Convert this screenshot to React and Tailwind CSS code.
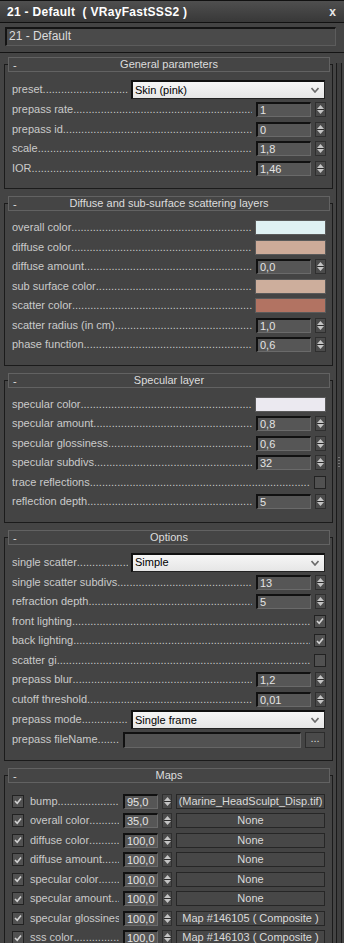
import React from 'react';

const FONT = { fontFamily: '"Liberation Sans", Arial, sans-serif' };

// leader dots, count roughly fits the room left of the control
const Dots = ({ n }) => (
  <span className="flex-1 min-w-0 overflow-hidden whitespace-nowrap">{'.'.repeat(n)}</span>
);

const Label = ({ text, n, className = 'flex-1' }) => (
  <div className={`flex min-w-0 items-center overflow-hidden text-[#cacaca] text-[11px] leading-[13px] ${className}`}>
    <span className="whitespace-nowrap">{text}</span>
    <Dots n={n} />
  </div>
);

const Spinner = ({ w = 'w-[11px]' }) => (
  <div className={`${w} h-[15px] shrink-0 bg-[#4b4b4b] border border-[#2f2f2f] flex flex-col items-center justify-between py-[2px]`}>
    <svg width="7" height="4" viewBox="0 0 7 4"><path d="M0 4 L3.5 0 L7 4 Z" fill="#c4c4c4" /></svg>
    <div className="w-[7px] h-px bg-[#2c2c2c]" />
    <svg width="7" height="4" viewBox="0 0 7 4"><path d="M0 0 L3.5 4 L7 0 Z" fill="#c4c4c4" /></svg>
  </div>
);

const NumBox = ({ value, w = 'w-[55px]' }) => (
  <div className={`${w} h-[15px] shrink-0 bg-[#565656] border-t-2 border-l-2 border-[#111] border-r border-b border-r-[#6a6a6a] border-b-[#6a6a6a] text-[#e4e4e4] text-[11px] leading-[12px] pl-[2px] whitespace-nowrap`}>
    {value}
  </div>
);

const Check = ({ checked }) => (
  <div className="w-[12px] h-[13px] shrink-0 bg-[#515151] border border-[#222] flex items-center justify-center">
    {checked && (
      <svg width="8" height="8" viewBox="0 0 8 8">
        <path d="M1 4 L3.2 6.3 L7 1.5" stroke="#d2d2d2" strokeWidth="1.6" fill="none" />
      </svg>
    )}
  </div>
);

const Dropdown = ({ value }) => (
  <div className="w-[194px] h-[19px] shrink-0 bg-gradient-to-b from-[#f6f6f6] to-[#e6e6e6] border-t-2 border-l-2 border-[#111] border-r border-b border-r-[#222] border-b-[#222] flex items-center justify-between pl-[2px] pr-[5px]">
    <span className="text-black text-[11px] leading-[13px]">{value}</span>
    <svg width="8" height="6" viewBox="0 0 8 6"><path d="M0.5 1 L4 5 L7.5 1" stroke="#6a6a6a" strokeWidth="1.6" fill="none" /></svg>
  </div>
);

const SpinRow = ({ label, value }) => (
  <div className="flex items-center h-[19.5px]">
    <Label text={label} n={72} className="flex-1 mr-[4px]" />
    <NumBox value={value} />
    <div className="w-[4px]" />
    <Spinner />
  </div>
);

const ColorRow = ({ label, color }) => (
  <div className="flex items-center h-[19.5px]">
    <Label text={label} n={72} className="flex-1 mr-[3px]" />
    <div className="w-[71px] h-[15px] shrink-0 border border-[#5a5a5a]" style={{ backgroundColor: color }} />
  </div>
);

const CheckRow = ({ label, checked }) => (
  <div className="flex items-center h-[19.5px]">
    <Label text={label} n={90} className="flex-1 mr-[4px]" />
    <Check checked={checked} />
  </div>
);

const DropRow = ({ label, value }) => (
  <div className="flex items-center h-[21px]">
    <Label text={label} n={32} className="w-[116px] mr-[3px]" />
    <Dropdown value={value} />
  </div>
);

const FileRow = ({ label }) => (
  <div className="flex items-center h-[19.5px]">
    <Label text={label} n={12} className="w-[107px] mr-[4px]" />
    <div className="w-[178px] h-[16px] shrink-0 bg-[#525252] border-t-2 border-l-2 border-[#111] border-r border-b border-r-[#666] border-b-[#666]" />
    <div className="w-[4px]" />
    <div className="w-[20px] h-[16px] shrink-0 bg-[#4a4a4a] border border-[#2c2c2c] text-[#dcdcdc] text-[11px] leading-[10px] text-center">...</div>
  </div>
);

const MapRow = ({ label, value, map }) => (
  <div className="flex items-center h-[19.5px]">
    <Check checked />
    <div className="w-[6px]" />
    <Label text={label} n={26} className="w-[89px] mr-[4px]" />
    <NumBox value={value} w="w-[35px]" />
    <div className="w-[4px]" />
    <Spinner w="w-[10px]" />
    <div className="w-[4px]" />
    <div className="w-[149px] h-[15px] shrink-0 bg-[#474747] border border-[#262626] text-[#dadada] text-[11px] leading-[13px] text-center whitespace-nowrap">
      {map}
    </div>
  </div>
);

const Rollout = ({ title, first, pt = 'pt-[7px]', children }) => (
  <div className={`${first ? 'mt-[11px]' : 'mt-[14px]'} w-[329px] border border-[#1b1b1b]`}>
    <div className="-mt-[8px] ml-[3px] mr-[2px] h-[15px] bg-[#454545] border border-[#626262] flex items-center relative">
      <span className="absolute left-[4px] top-[1px] text-[#dddddd] text-[11px] leading-[12px]">-</span>
      <span className="flex-1 text-center text-[#dddddd] text-[11px] leading-none">{title}</span>
    </div>
    <div className={`${pt} pb-[10px] pl-[7px] pr-[6px]`}>{children}</div>
  </div>
);

export default function App() {
  return (
    <div className="w-[344px] h-[943px] bg-[#444444] overflow-hidden flex flex-col" style={FONT}>
      <div className="h-[23px] shrink-0 border-t border-b border-[#111] bg-gradient-to-b from-[#4f4f4f] to-[#383838] flex items-center justify-between pl-[7px] pr-[8px]">
        <span className="text-white text-[12px] font-bold tracking-[0.3px] whitespace-pre">21 - Default  ( VRayFastSSS2 )</span>
        <span className="text-[#e8e8e8] text-[12px] font-bold leading-none">x</span>
      </div>
      <div className="h-[29px] shrink-0 pt-[4px] pl-[5px]">
        <div className="w-[331px] h-[19px] bg-[#4a4a4a] border-t-2 border-l-2 border-[#141414] border-r border-b border-r-[#5c5c5c] border-b-[#5c5c5c] text-[#dcdcdc] text-[12px] leading-[15px] pl-[2px]">
          21 - Default
        </div>
      </div>
      <div className="flex-1 flex border-t border-[#141414] overflow-hidden">
        <div className="w-[334px] pl-[4px] shrink-0">
          <Rollout title="General parameters" first>
            <DropRow label="preset" value="Skin (pink)" />
            <SpinRow label="prepass rate" value="1" />
            <SpinRow label="prepass id" value="0" />
            <SpinRow label="scale" value="1,8" />
            <SpinRow label="IOR" value="1,46" />
          </Rollout>
          <Rollout title="Diffuse and sub-surface scattering layers">
            <ColorRow label="overall color" color="#dff1f3" />
            <ColorRow label="diffuse color" color="#cdab99" />
            <SpinRow label="diffuse amount" value="0,0" />
            <ColorRow label="sub surface color" color="#cdae9c" />
            <ColorRow label="scatter color" color="#b27362" />
            <SpinRow label="scatter radius (in cm)" value="1,0" />
            <SpinRow label="phase function" value="0,6" />
          </Rollout>
          <Rollout title="Specular layer">
            <ColorRow label="specular color" color="#ebe9f0" />
            <SpinRow label="specular amount" value="0,8" />
            <SpinRow label="specular glossiness" value="0,6" />
            <SpinRow label="specular subdivs" value="32" />
            <CheckRow label="trace reflections" />
            <SpinRow label="reflection depth" value="5" />
          </Rollout>
          <Rollout title="Options">
            <DropRow label="single scatter" value="Simple" />
            <SpinRow label="single scatter subdivs" value="13" />
            <SpinRow label="refraction depth" value="5" />
            <CheckRow label="front lighting" checked />
            <CheckRow label="back lighting" checked />
            <CheckRow label="scatter gi" />
            <SpinRow label="prepass blur" value="1,2" />
            <SpinRow label="cutoff threshold" value="0,01" />
            <DropRow label="prepass mode" value="Single frame" />
            <FileRow label="prepass fileName" />
          </Rollout>
          <Rollout title="Maps" pt="pt-[9px]">
            <MapRow label="bump" value="95,0" map="(Marine_HeadSculpt_Disp.tif)" />
            <MapRow label="overall color" value="35,0" map="None" />
            <MapRow label="diffuse color" value="100,0" map="None" />
            <MapRow label="diffuse amount" value="100,0" map="None" />
            <MapRow label="specular color" value="100,0" map="None" />
            <MapRow label="specular amount" value="100,0" map="None" />
            <MapRow label="specular glossiness" value="100,0" map="Map #146105  ( Composite )" />
            <MapRow label="sss color" value="100,0" map="Map #146103  ( Composite )" />
          </Rollout>
        </div>
        <div className="w-[10px] shrink-0 pt-[10px] pl-[2px]">
          <div className="w-[6px] h-[880px] bg-[#3e3e3e] border-x border-[#1a1a1a] flex flex-col items-center pt-[394px] gap-[2px]">
            <div className="w-[2px] h-px bg-[#777]" />
            <div className="w-[2px] h-px bg-[#777]" />
            <div className="w-[2px] h-px bg-[#777]" />
            <div className="w-[2px] h-px bg-[#777]" />
          </div>
        </div>
      </div>
    </div>
  );
}
